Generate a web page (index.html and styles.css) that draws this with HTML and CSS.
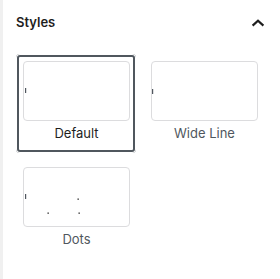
FILE: index.html
```html
<!DOCTYPE html>
<html lang="en">
<head>
    <meta charset="UTF-8">
    <meta name="viewport" content="width=device-width, initial-scale=1.0">
    <title>Styles</title>
    <link rel="stylesheet" href="styles.css">
</head>
<body>
    <div class="sidebar">
        <div class="panel-head">
            <h2 class="panel-title">Styles</h2>
            <svg class="chevron" width="24" height="24" viewBox="0 0 24 24" aria-hidden="true">
                <polyline points="6.6,13.6 12,8.8 17.4,13.6"></polyline>
            </svg>
        </div>

        <div class="block-styles">
            <div class="style-item is-active">
                <div class="style-preview">
                    <svg width="106" height="58" viewBox="0 0 106 58">
                        <rect x="1" y="26" width="1.2" height="5" fill="#50575e"></rect>
                    </svg>
                </div>
                <div class="style-label">Default</div>
            </div>
            <div class="style-item">
                <div class="style-preview">
                    <svg width="106" height="58" viewBox="0 0 106 58">
                        <rect x="0" y="27" width="1.2" height="5" fill="#50575e"></rect>
                    </svg>
                </div>
                <div class="style-label">Wide Line</div>
            </div>
            <div class="style-item">
                <div class="style-preview">
                    <svg width="106" height="58" viewBox="0 0 106 58">
                        <rect x="1" y="26" width="1.2" height="5" fill="#50575e"></rect>
                        <rect x="53.5" y="30.5" width="1.3" height="1.3" fill="#1e1e1e"></rect>
                        <rect x="23.5" y="44.5" width="1.3" height="1.3" fill="#1e1e1e"></rect>
                        <rect x="54.5" y="44.5" width="1.3" height="1.3" fill="#1e1e1e"></rect>
                    </svg>
                </div>
                <div class="style-label">Dots</div>
            </div>
        </div>
    </div>
</body>
</html>
```

FILE: styles.css
```css
body {
    margin: 0;
    background-color: #fff;
    font-family: Inter, "Noto Sans", sans-serif;
    color: #1e1e1e;
}
.sidebar {
    min-height: 279px;
    border-left: 3px solid #f0f0f0;
    padding-left: 13px;
    box-sizing: border-box;
}
.panel-head {
    display: flex;
    justify-content: space-between;
    align-items: flex-start;
    height: 48px;
    padding: 12px 10px 0 0;
    box-sizing: border-box;
}
.panel-title {
    margin: 0;
    font-size: 13px;
    line-height: 20px;
    font-weight: 600;
}
.chevron {
    display: block;
    fill: none;
    stroke: #1e1e1e;
    stroke-width: 2.2;
}
.block-styles {
    display: grid;
    grid-template-columns: 120px 120px;
    column-gap: 8px;
    row-gap: 7px;
    margin-top: 6px;
}
.style-item {
    padding: 7px 6px 5px 7px;
    border-radius: 4px;
    cursor: pointer;
}
.style-item.is-active {
    box-shadow: inset 0 0 0 1px #fff, inset 0 0 0 3px #50575e;
}
.style-preview {
    height: 60px;
    border: 1px solid #dcdcde;
    border-radius: 4px;
    background-color: #fff;
    box-sizing: border-box;
    overflow: hidden;
}
.style-preview svg {
    display: block;
}
.style-label {
    padding: 3px 2px 6px;
    font-size: 13px;
    line-height: 18px;
    text-align: center;
    color: #50575e;
}
.style-item.is-active .style-label {
    color: #1e1e1e;
}
```
